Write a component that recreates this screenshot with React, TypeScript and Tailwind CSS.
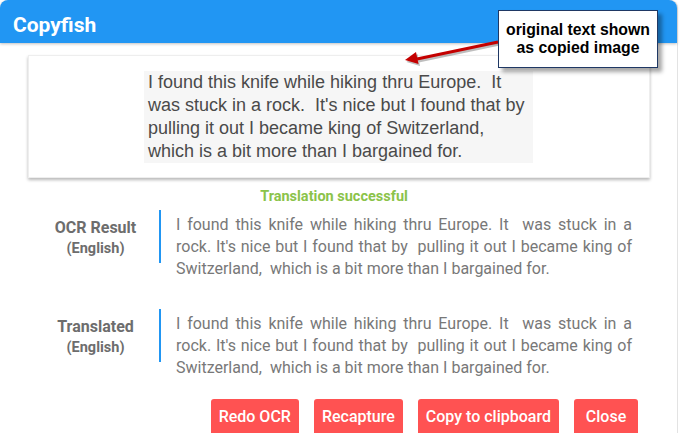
export default function App() {
  const ocr = [
    "I found this knife while hiking thru Europe. It\u00a0 was stuck in a",
    "rock. It's nice but I found that by\u00a0 pulling it out I became king of",
  ];
  const last = "Switzerland,\u00a0 which is a bit more than I bargained for.";
  const Body = () => (
    <div className="ml-[15px] w-[456px] pt-[4px] text-[16px] leading-[22px] text-[#787878]">
      {ocr.map((l) => (
        <div key={l} className="text-justify [text-align-last:justify]">
          {l}
        </div>
      ))}
      <div>{last}</div>
    </div>
  );
  const Label = ({ a }: { a: string }) => (
    <div className="w-[129px] shrink-0 self-start border-r-2 border-[#2196f3] pt-[7px] pb-[4px] text-center font-bold text-[#6d6d6d]">
      <div className="text-[16px] leading-[21px]">{a}</div>
      <div className="text-[14.5px] leading-[21px]">(English)</div>
    </div>
  );
  return (
    <div className="relative w-[686px] h-[433px] overflow-hidden bg-white font-[Roboto,sans-serif]">
      <div className="w-[678px] h-full border-r border-[#e3e3e3] rounded-t-[8px]">
        <div className="relative z-10 h-[43px] bg-[#2196f3] rounded-t-[8px] px-[13px] pt-[13px] text-white font-bold text-[21px] leading-[25px] shadow-[0_1px_3px_rgba(0,0,0,0.25)]">
          Copyfish
        </div>
        <div className="ml-[28px] mt-[12px] w-[622px] h-[123px] pt-[15px] border border-[#eeeeee] shadow-[0_2px_3px_rgba(0,0,0,0.28)]">
          <div className="ml-[115px] w-[389px] bg-[#f6f6f6] px-[4px] text-[18px] leading-[23px] text-[#4a4a4a] font-['Liberation_Sans',Arial,sans-serif]">
            <div className="whitespace-pre">I found this knife while hiking thru Europe.  It</div>
            <div className="whitespace-pre">was stuck in a rock.  It's nice but I found that by</div>
            <div className="whitespace-pre">pulling it out I became king of Switzerland,</div>
            <div className="whitespace-pre">which is a bit more than I bargained for.</div>
          </div>
        </div>
        <div className="mt-[9px] pr-[9px] text-center text-[14.5px] leading-[20px] font-bold text-[#8bc34a]">
          Translation successful
        </div>
        <div className="mt-[3px] ml-[32px] flex">
          <Label a="OCR Result" />
          <Body />
        </div>
        <div className="mt-[29px] ml-[32px] flex">
          <Label a="Translated" />
          <Body />
        </div>
        <div className="mt-[20px] pr-[39px] flex justify-end gap-[15px]">
          {["Redo OCR", "Recapture", "Copy to clipboard", "Close"].map((b) => (
            <div
              key={b}
              className="h-[36px] min-w-[64px] px-[8px] rounded-[3px] bg-[#ff5252] text-white text-[16px] font-medium leading-[36px] text-center"
            >
              {b}
            </div>
          ))}
        </div>
      </div>

      <svg className="absolute left-[395px] top-[30px] z-20" width="110" height="45" viewBox="0 0 110 45">
        <g transform="translate(1.5,2)" opacity="0.25">
          <line x1="103" y1="12" x2="22" y2="29" stroke="#000" strokeWidth="3" />
          <polygon points="10,30 23.5,34 21,22" fill="#000" />
        </g>
        <line x1="103" y1="12" x2="22" y2="29" stroke="#c40000" strokeWidth="3" />
        <polygon points="10,30 23.5,34 21,22" fill="#c40000" />
      </svg>

      <div className="absolute left-[498px] top-[10px] z-30 w-[160px] h-[58px] border-[1.5px] border-[#1f3864] bg-white shadow-[4px_4px_4px_rgba(0,0,0,0.35)] flex flex-col items-center justify-center font-['Liberation_Sans',Arial,sans-serif] font-bold text-[15.8px] leading-[18px] text-black">
        <div>original text shown</div>
        <div>as copied image</div>
      </div>
    </div>
  );
}
